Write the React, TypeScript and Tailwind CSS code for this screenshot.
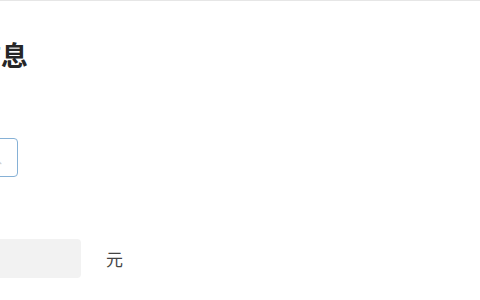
import React from "react";

export default function App() {
  return (
    <div
      className="w-[480px] h-[300px] overflow-hidden bg-white border-t border-[#e6e6e6]"
      style={{ fontFamily: '"Noto Sans CJK SC", "Noto Sans", sans-serif' }}
    >
      <div className="ml-[-80px] flex flex-col">
        <h1 className="mt-[37px] text-[27px] leading-[33px] font-bold text-[#262626]">基本信息</h1>
        <div className="mt-[67px] w-[98px] h-[39px] rounded-[4px] border border-[#86b1d6] flex items-center justify-end pr-[15px] text-[14px] text-[#cccccc]">
          请输入
        </div>
        <div className="mt-[62px] flex items-center gap-[25px]">
          <div className="w-[161px] h-[39px] rounded-[4px] bg-[#f2f2f2]"></div>
          <span className="text-[17px] text-[#444444]">元</span>
        </div>
      </div>
    </div>
  );
}
